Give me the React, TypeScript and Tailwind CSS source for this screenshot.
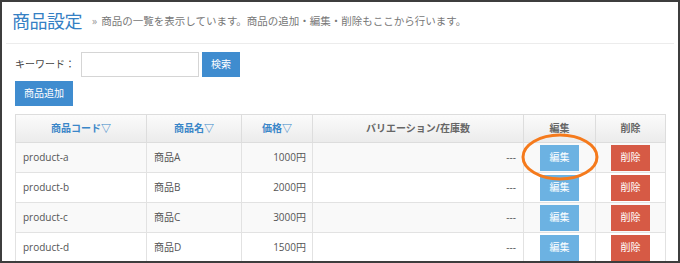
const rows = [
  { code: "product-a", name: "商品A", price: "1000円" },
  { code: "product-b", name: "商品B", price: "2000円" },
  { code: "product-c", name: "商品C", price: "3000円" },
  { code: "product-d", name: "商品D", price: "1500円" },
]

export default function App() {
  return (
    <div
      className="relative w-[680px] h-[263px] overflow-hidden border-2 border-[#3d3d3d] bg-white text-[10px] text-[#555]"
      style={{ fontFamily: '"Open Sans", "Noto Sans CJK JP", sans-serif' }}
    >
      {/* page header */}
      <div className="flex items-end px-[10px] pt-[7px] pb-[10px] mx-[4px] border-b border-[#ececec]">
        <h1 className="text-[18px] leading-[24px] text-[#3580c4] tracking-[-0.5px] -ml-[4px]">商品設定</h1>
        <p className="ml-[10px] mb-[3px] text-[10.5px] text-[#777]">
          <span className="mr-[4px] text-[#999]">»</span>商品の一覧を表示しています。商品の追加・編集・削除もここから行います。
        </p>
      </div>

      <div className="px-[13px] pt-[8px]">
        {/* search */}
        <div className="flex items-center">
          <span className="w-[66px] text-[#444]">キーワード：</span>
          <input className="w-[118px] h-[25px] border border-[#d5d5d5] bg-white outline-none" />
          <button className="ml-[3px] w-[38px] h-[25px] bg-[#3f8ccf] text-white">検索</button>
        </div>
        <button className="mt-[4px] w-[58px] h-[25px] bg-[#3f8ccf] text-white">商品追加</button>

        {/* list */}
        <table className="mt-[8px] w-[650px] border-collapse table-fixed">
          <colgroup>
            <col className="w-[131px]" />
            <col className="w-[95px]" />
            <col className="w-[71px]" />
            <col className="w-[211px]" />
            <col className="w-[72px]" />
            <col className="w-[70px]" />
          </colgroup>
          <thead>
            <tr className="h-[28px] bg-gradient-to-b from-[#fbfbfb] to-[#ebebeb]">
              <th className="border border-[#ddd] font-bold text-[#3a86c8]">商品コード▽</th>
              <th className="border border-[#ddd] font-bold text-[#3a86c8]">商品名▽</th>
              <th className="border border-[#ddd] font-bold text-[#3a86c8]">価格▽</th>
              <th className="border border-[#ddd] font-bold text-[#666]">バリエーション/在庫数</th>
              <th className="border border-[#ddd] font-bold text-[#666]">編集</th>
              <th className="border border-[#ddd] font-bold text-[#666]">削除</th>
            </tr>
          </thead>
          <tbody>
            {rows.map((r, i) => (
              <tr key={r.code} className={i % 2 === 0 ? "h-[30px] bg-[#f9f9f9]" : "h-[30px] bg-white"}>
                <td className="border border-[#e2e2e2] pl-[7px]">{r.code}</td>
                <td className="border border-[#e2e2e2] pl-[7px]">{r.name}</td>
                <td className="border border-[#e2e2e2] pr-[6px] text-right">{r.price}</td>
                <td className="border border-[#e2e2e2] pr-[7px] text-right">---</td>
                <td className="border border-[#e2e2e2] text-center">
                  <button className="w-[39px] h-[26px] bg-[#6cb2e2] text-white">編集</button>
                </td>
                <td className="border border-[#e2e2e2] text-center">
                  <button className="w-[39px] h-[26px] bg-[#d65a45] text-white">削除</button>
                </td>
              </tr>
            ))}
          </tbody>
        </table>
      </div>

      {/* highlight mark */}
      <svg className="absolute left-[518px] top-[129px]" width="84" height="54" viewBox="0 0 84 54">
        <ellipse cx="40" cy="26" rx="37" ry="22" fill="none" stroke="#f57a1c" strokeWidth="3" />
      </svg>
    </div>
  )
}
